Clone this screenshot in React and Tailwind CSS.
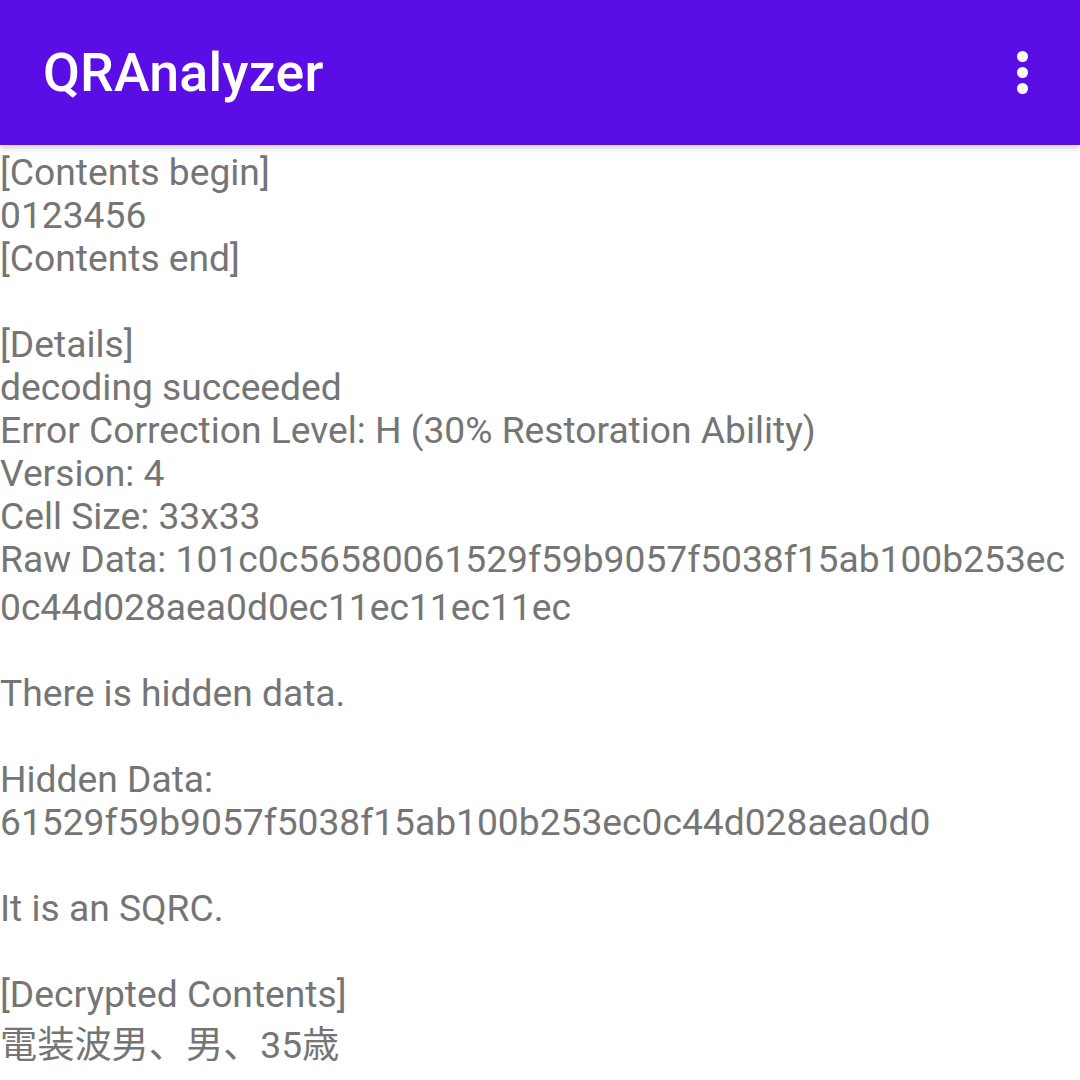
export default function App() {
    const lines = [
        '[Contents begin]',
        '0123456',
        '[Contents end]',
        '',
        '[Details]',
        'decoding succeeded',
        'Error Correction Level: H (30% Restoration Ability)',
        'Version: 4',
        'Cell Size: 33x33',
    ];

    return (
        <div className="w-[1080px] h-[1080px] overflow-hidden bg-white" style={{ fontFamily: 'Roboto, "Noto Sans CJK JP", sans-serif' }}>
            <header className="relative z-10 h-[145px] bg-[#5b0de6] flex items-center justify-between pl-[43px] pr-[46px] shadow-[0_3px_6px_rgba(0,0,0,0.18)]">
                <h1 className="text-[53.6px] font-medium text-white leading-none tracking-[0.2px]">QRAnalyzer</h1>
                <div className="flex flex-col items-center gap-[5px] w-[24px]">
                    <span className="block w-[11px] h-[11px] rounded-full bg-white" />
                    <span className="block w-[11px] h-[11px] rounded-full bg-white" />
                    <span className="block w-[11px] h-[11px] rounded-full bg-white" />
                </div>
            </header>

            <main className="pt-[6px] text-[37.2px] leading-[43px] text-[#757575]">
                {lines.map((line, i) => (
                    <div key={i} className="h-[43px] whitespace-nowrap">{line}</div>
                ))}
                <div className="h-[43px] whitespace-nowrap">Raw Data: 101c0c56580061529f59b9057f5038f15ab100b253ec</div>
                <div className="h-[43px] mt-[5px] whitespace-nowrap">0c44d028aea0d0ec11ec11ec11ec</div>
                <div className="h-[43px]" />
                <div className="h-[43px]">There is hidden data.</div>
                <div className="h-[43px]" />
                <div className="h-[43px]">Hidden Data:</div>
                <div className="h-[43px]">61529f59b9057f5038f15ab100b253ec0c44d028aea0d0</div>
                <div className="h-[43px]" />
                <div className="h-[43px]">It is an SQRC.</div>
                <div className="h-[43px]" />
                <div className="h-[43px]">[Decrypted Contents]</div>
                <div className="h-[43px] mt-[8px]">電装波男、男、35歳</div>
            </main>
        </div>
    );
}
